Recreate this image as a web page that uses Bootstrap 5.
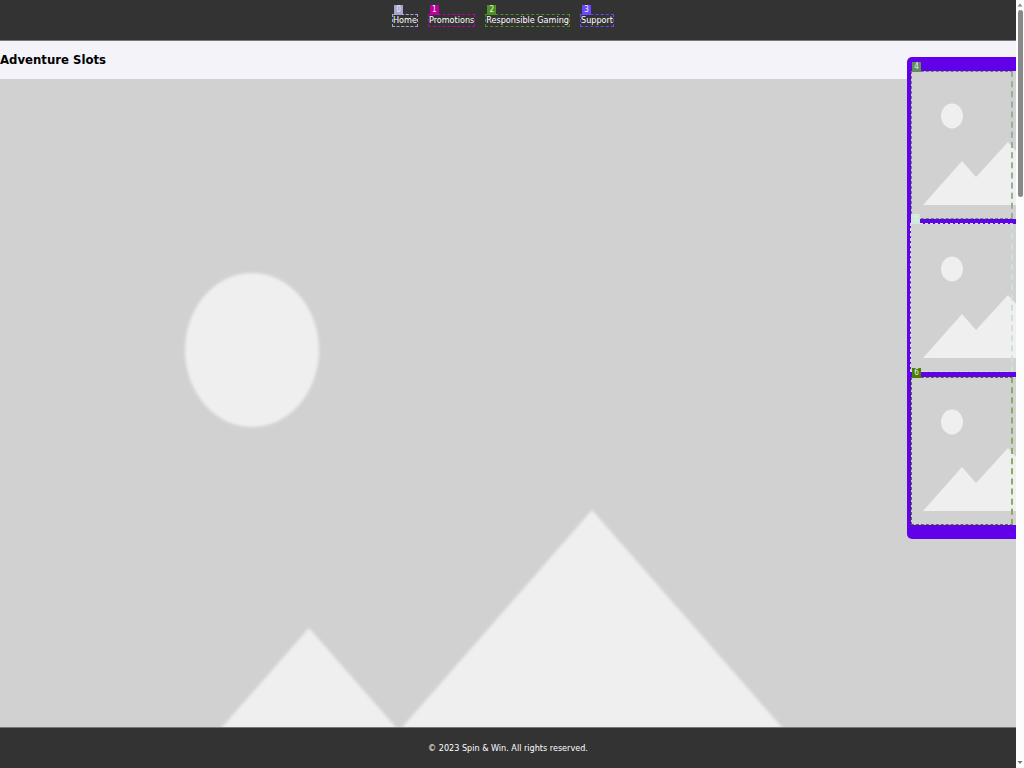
<!DOCTYPE html>
<html lang="en">
<head>
<meta charset="utf-8">
<meta name="viewport" content="width=device-width, initial-scale=1">
<title>Spin &amp; Win</title>
<link href="https://cdn.jsdelivr.net/npm/bootstrap@5.3.0/dist/css/bootstrap.min.css" rel="stylesheet">
<style>
  body { font-family: "DejaVu Sans Condensed", "DejaVu Sans", sans-serif; font-size: 9px; line-height: 11px; background: #f4f3fa; color: #000; }
  .page-col { min-width: 0; }
  .bar-dark { background: #333; color: #fff; }
  .site-header { height: 41px; padding-top: 14px; border-bottom: 1px solid #777; }
  .site-footer { height: 41px; border-top: 1px solid #777; }
  .site-title { font-size: 13px; line-height: 38px; font-weight: 700; }
  .marked { border: 1px dashed var(--tag); }
  .site-link { color: #fff; margin-right: 10px; }
  .tag-label { position: absolute; left: 1px; bottom: 100%; width: 9px; height: 10px; background: var(--tag); color: #eee; font-size: 8px; line-height: 10px; text-align: center; }
  .hero { min-height: 0; background: #d1d1d1; }
  .side-panel { top: 57px; right: 0; width: 109px; padding: 14px 0 14px 4px; gap: 5px; background: #6200ea; border-radius: 5px 0 0 5px; z-index: 2; }
  .game { height: 148px; background: #d1d1d1; }
  .game .marked { position: absolute; inset: 0 3px 0 0; border-right: 2px dashed var(--soft); }
  .scroll-track { width: 8px; background: #fcfcfc; }
  .scroll-thumb { width: 5px; height: 187px; border-radius: 3px; background: #888; }
  .game .tag-label { left: 0; }
  .game .pale { inset: -1px 3px 0 -1px; }
</style>
</head>
<body class="d-flex vh-100 overflow-hidden">
<div class="page-col flex-grow-1 d-flex flex-column position-relative overflow-hidden">
  <header class="bar-dark site-header flex-shrink-0">
    <nav class="d-flex justify-content-center">
      <a href="#" class="site-link marked position-relative text-decoration-none" style="--tag:#a5a6d0"><span class="tag-label">0</span>Home</a>
      <a href="#" class="site-link marked position-relative text-decoration-none" style="--tag:#bb009c"><span class="tag-label">1</span>Promotions</a>
      <a href="#" class="site-link marked position-relative text-decoration-none" style="--tag:#4b9020"><span class="tag-label">2</span>Responsible Gaming</a>
      <a href="#" class="site-link marked position-relative text-decoration-none" style="--tag:#6a48fa"><span class="tag-label">3</span>Support</a>
    </nav>
  </header>
  <h1 class="site-title m-0 flex-shrink-0">Adventure Slots</h1>
  <main class="hero flex-grow-1">
    <svg class="d-block w-100 h-100" viewBox="0 0 1016 648" preserveAspectRatio="xMidYMin slice" role="img" aria-label="Adventure Slots banner">
      <defs><filter id="soft"><feGaussianBlur stdDeviation="1.5"/></filter></defs>
      <g fill="#efefef" filter="url(#soft)">
        <ellipse cx="252" cy="271" rx="67" ry="77"/>
        <path d="M309 549 399 652 592 431 800 669V760H124Z"/>
      </g>
    </svg>
  </main>
  <footer class="bar-dark site-footer flex-shrink-0 d-flex align-items-center justify-content-center">© 2023 Spin &amp; Win. All rights reserved.</footer>

  <aside class="side-panel position-absolute d-flex flex-column">
    <a href="#" class="game d-block position-relative" aria-label="Game 4" style="--tag:#5f8c62;--soft:#93b196">
      <svg class="d-block" width="105" height="148" viewBox="0 0 105 148"><g fill="#efefef"><ellipse cx="41" cy="45" rx="11" ry="12.5"/><path d="M12 134 51 90 65 106 97 71 105 80V134Z"/></g></svg>
      <span class="marked"><span class="tag-label">4</span></span>
    </a>
    <a href="#" class="game d-block position-relative" aria-label="Game 5" style="--tag:#cdeadb;--soft:#cfe2d8">
      <svg class="d-block" width="105" height="148" viewBox="0 0 105 148"><g fill="#efefef"><ellipse cx="41" cy="45" rx="11" ry="12.5"/><path d="M12 134 51 90 65 106 97 71 105 80V134Z"/></g></svg>
      <span class="marked pale"><span class="tag-label">5</span></span>
    </a>
    <a href="#" class="game d-block position-relative" aria-label="Game 6" style="--tag:#4c7d08;--soft:#8cab62">
      <svg class="d-block" width="105" height="148" viewBox="0 0 105 148"><g fill="#efefef"><ellipse cx="41" cy="45" rx="11" ry="12.5"/><path d="M12 134 51 90 65 106 97 71 105 80V134Z"/></g></svg>
      <span class="marked"><span class="tag-label">6</span></span>
    </a>
  </aside>
</div>
<div class="scroll-track flex-shrink-0 d-flex flex-column align-items-center justify-content-between" aria-hidden="true">
  <div class="d-flex flex-column align-items-center">
    <svg class="d-block" width="8" height="10" viewBox="0 0 8 10"><path d="M1.500 6.500 4 3.500 6.500 6.500Z" fill="#888"/></svg>
    <div class="scroll-thumb"></div>
  </div>
  <svg class="d-block" width="8" height="10" viewBox="0 0 8 10"><path d="M1.500 3 4 6 6.500 3Z" fill="#777"/></svg>
</div>
<script src="https://cdn.jsdelivr.net/npm/bootstrap@5.3.0/dist/js/bootstrap.bundle.min.js"></script>
</body>
</html>
